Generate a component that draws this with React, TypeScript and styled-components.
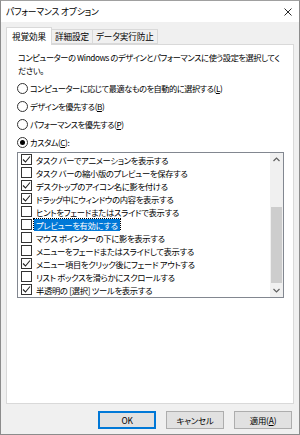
import React from "react";
import styled, { createGlobalStyle } from "styled-components";

const GlobalStyle = createGlobalStyle`
  html, body {
    margin: 0;
    padding: 0;
    background: #ffffff;
  }
  body {
    font-family: "Noto Sans CJK JP", "Noto Sans", sans-serif;
    font-feature-settings: "palt";
    font-size: 8.6px;
    letter-spacing: -0.1px;
    color: #000;
  }
`;

const Window = styled.div`
  width: 300px;
  height: 435px;
  box-sizing: border-box;
  border: 1px solid #8c8c8c;
  border-top-color: #a0a0a0;
  background: #f0f0f0;
  display: flex;
  flex-direction: column;
`;

const TitleBar = styled.div`
  height: 21px;
  background: #fff;
  display: flex;
  align-items: center;
  justify-content: space-between;
  padding: 0 7px 0 5px;
  font-size: 8.8px;
  letter-spacing: -0.2px;
`;

const Body = styled.div`
  flex: 1;
  display: flex;
  flex-direction: column;
  padding: 5px 5px 0 5px;
`;

const TabStrip = styled.div`
  display: flex;
  align-items: flex-end;
  height: 17px;
  position: relative;
  z-index: 1;
`;

const Tab = styled.div<{ active?: boolean }>`
  box-sizing: border-box;
  height: ${({ active }) => (active ? "18px" : "15px")};
  margin-bottom: ${({ active }) => (active ? "-1px" : "0")};
  padding: 0 ${({ active }) => (active ? "5px" : "3px")};
  background: ${({ active }) => (active ? "#fff" : "#f0f0f0")};
  border: 1px solid #d9d9d9;
  border-bottom: ${({ active }) => (active ? "none" : "1px solid #d9d9d9")};
  margin-left: ${({ active }) => (active ? "0" : "-1px")};
  display: flex;
  align-items: center;
  line-height: 1;
`;

const Panel = styled.div`
  height: 360px;
  box-sizing: border-box;
  background: #fff;
  border: 1px solid #d9d9d9;
  padding: 6px 9px 0 10px;
  display: flex;
  flex-direction: column;
`;

const Description = styled.div`
  line-height: 13px;
  margin-left: 1px;
  width: 262px;
  font-size: 8.2px;
  letter-spacing: -0.4px;
`;

const RadioList = styled.div`
  margin-top: 2px;
  display: flex;
  flex-direction: column;
`;

const RadioRow = styled.div`
  height: 18px;
  display: flex;
  align-items: center;
  font-size: 8.2px;
  letter-spacing: -0.45px;
`;

const RadioCircle = styled.span<{ checked?: boolean }>`
  width: 11px;
  height: 11px;
  box-sizing: border-box;
  border: 1px solid #333;
  border-radius: 50%;
  background: #fff;
  margin-right: 2px;
  display: flex;
  align-items: center;
  justify-content: center;
  &::after {
    content: "";
    width: 5px;
    height: 5px;
    border-radius: 50%;
    background: ${({ checked }) => (checked ? "#000" : "transparent")};
  }
`;

const Underline = styled.span`
  text-decoration: underline;
`;

const ListBox = styled.div`
  margin-top: 1px;
  height: 146px;
  box-sizing: border-box;
  border: 1px solid #828790;
  display: flex;
`;

const Items = styled.div`
  flex: 1;
  padding: 0 0 0 3px;
  display: flex;
  flex-direction: column;
`;

const ItemRow = styled.div`
  height: 13px;
  display: flex;
  align-items: center;
  white-space: nowrap;
  overflow: hidden;
  font-size: 8.3px;
  letter-spacing: -0.3px;
`;

const CheckBox = styled.span`
  width: 11px;
  height: 11px;
  box-sizing: border-box;
  border: 1px solid #333;
  background: #fff;
  flex-shrink: 0;
  display: flex;
  align-items: center;
  justify-content: center;
  margin-right: 2px;
`;

const ItemLabel = styled.span<{ selected?: boolean }>`
  padding: 0 2px;
  line-height: 12px;
  background: ${({ selected }) => (selected ? "#0078d7" : "transparent")};
  color: ${({ selected }) => (selected ? "#fff" : "#000")};
  outline: ${({ selected }) => (selected ? "1px dotted #000" : "none")};
`;

const ScrollBar = styled.div`
  width: 13px;
  background: #f0f0f0;
  display: flex;
  flex-direction: column;
`;

const ScrollArrow = styled.div`
  height: 13px;
  display: flex;
  align-items: center;
  justify-content: center;
`;

const Track = styled.div`
  flex: 1;
  display: flex;
  flex-direction: column;
  padding: 0 1px;
`;

const Thumb = styled.div<{ offset: number; size: number }>`
  margin-top: ${({ offset }) => offset}px;
  height: ${({ size }) => size}px;
  background: #cdcdcd;
`;

const ButtonRow = styled.div`
  display: flex;
  justify-content: flex-end;
  gap: 10px;
  margin-top: 7px;
  padding-right: 2px;
`;

const Button = styled.button<{ primary?: boolean }>`
  width: 58px;
  height: 18px;
  box-sizing: border-box;
  background: #e1e1e1;
  border: 1px solid ${({ primary }) => (primary ? "#0078d7" : "#adadad")};
  box-shadow: ${({ primary }) => (primary ? "inset 0 0 0 1px #0078d7" : "none")};
  font-family: inherit;
  font-feature-settings: "palt";
  font-size: 8.4px;
  letter-spacing: -0.2px;
  padding: 0;
  color: #000;
`;

const Check = () => (
  <svg width="9" height="9" viewBox="0 0 9 9">
    <path d="M1 4.5 L3.5 7 L8 1.5" fill="none" stroke="#222" strokeWidth="1.1" />
  </svg>
);

const Chevron = ({ up }: { up?: boolean }) => (
  <svg width="7" height="5" viewBox="0 0 7 5">
    <path
      d={up ? "M0.5 4 L3.5 1 L6.5 4" : "M0.5 1 L3.5 4 L6.5 1"}
      fill="none"
      stroke="#606060"
      strokeWidth="1.2"
    />
  </svg>
);

const CloseIcon = () => (
  <svg width="8" height="8" viewBox="0 0 8 8">
    <path d="M0.5 0.5 L7.5 7.5 M7.5 0.5 L0.5 7.5" stroke="#111" strokeWidth="0.9" />
  </svg>
);

const effects = [
  { label: "タスク バーでアニメーションを表示する", checked: true },
  { label: "タスク バーの縮小版のプレビューを保存する", checked: false },
  { label: "デスクトップのアイコン名に影を付ける", checked: true },
  { label: "ドラッグ中にウィンドウの内容を表示する", checked: true },
  { label: "ヒントをフェードまたはスライドで表示する", checked: false },
  { label: "プレビューを有効にする", checked: false, selected: true },
  { label: "マウス ポインターの下に影を表示する", checked: false },
  { label: "メニューをフェードまたはスライドして表示する", checked: false },
  { label: "メニュー項目をクリック後にフェード アウトする", checked: true },
  { label: "リスト ボックスを滑らかにスクロールする", checked: false },
  { label: "半透明の [選択] ツールを表示する", checked: true },
];

const App: React.FC = () => (
  <>
    <GlobalStyle />
    <Window>
      <TitleBar>
        <span>パフォーマンス オプション</span>
        <CloseIcon />
      </TitleBar>
      <Body>
        <TabStrip>
          <Tab active>視覚効果</Tab>
          <Tab>詳細設定</Tab>
          <Tab>データ実行防止</Tab>
        </TabStrip>
        <Panel>
          <Description>
            コンピューターの Windows のデザインとパフォーマンスに使う設定を選択してください。
          </Description>
          <RadioList>
            <RadioRow>
              <RadioCircle />
              コンピューターに応じて最適なものを自動的に選択する(<Underline>L</Underline>)
            </RadioRow>
            <RadioRow>
              <RadioCircle />
              デザインを優先する(<Underline>B</Underline>)
            </RadioRow>
            <RadioRow>
              <RadioCircle />
              パフォーマンスを優先する(<Underline>P</Underline>)
            </RadioRow>
            <RadioRow>
              <RadioCircle checked />
              カスタム(<Underline>C</Underline>):
            </RadioRow>
          </RadioList>
          <ListBox>
            <Items>
              {effects.map((e) => (
                <ItemRow key={e.label}>
                  <CheckBox>{e.checked && <Check />}</CheckBox>
                  <ItemLabel selected={e.selected}>{e.label}</ItemLabel>
                </ItemRow>
              ))}
            </Items>
            <ScrollBar>
              <ScrollArrow>
                <Chevron up />
              </ScrollArrow>
              <Track>
                <Thumb offset={41} size={76} />
              </Track>
              <ScrollArrow>
                <Chevron />
              </ScrollArrow>
            </ScrollBar>
          </ListBox>
        </Panel>
        <ButtonRow>
          <Button primary>OK</Button>
          <Button>キャンセル</Button>
          <Button>
            適用(<Underline>A</Underline>)
          </Button>
        </ButtonRow>
      </Body>
    </Window>
  </>
);

export default App;
